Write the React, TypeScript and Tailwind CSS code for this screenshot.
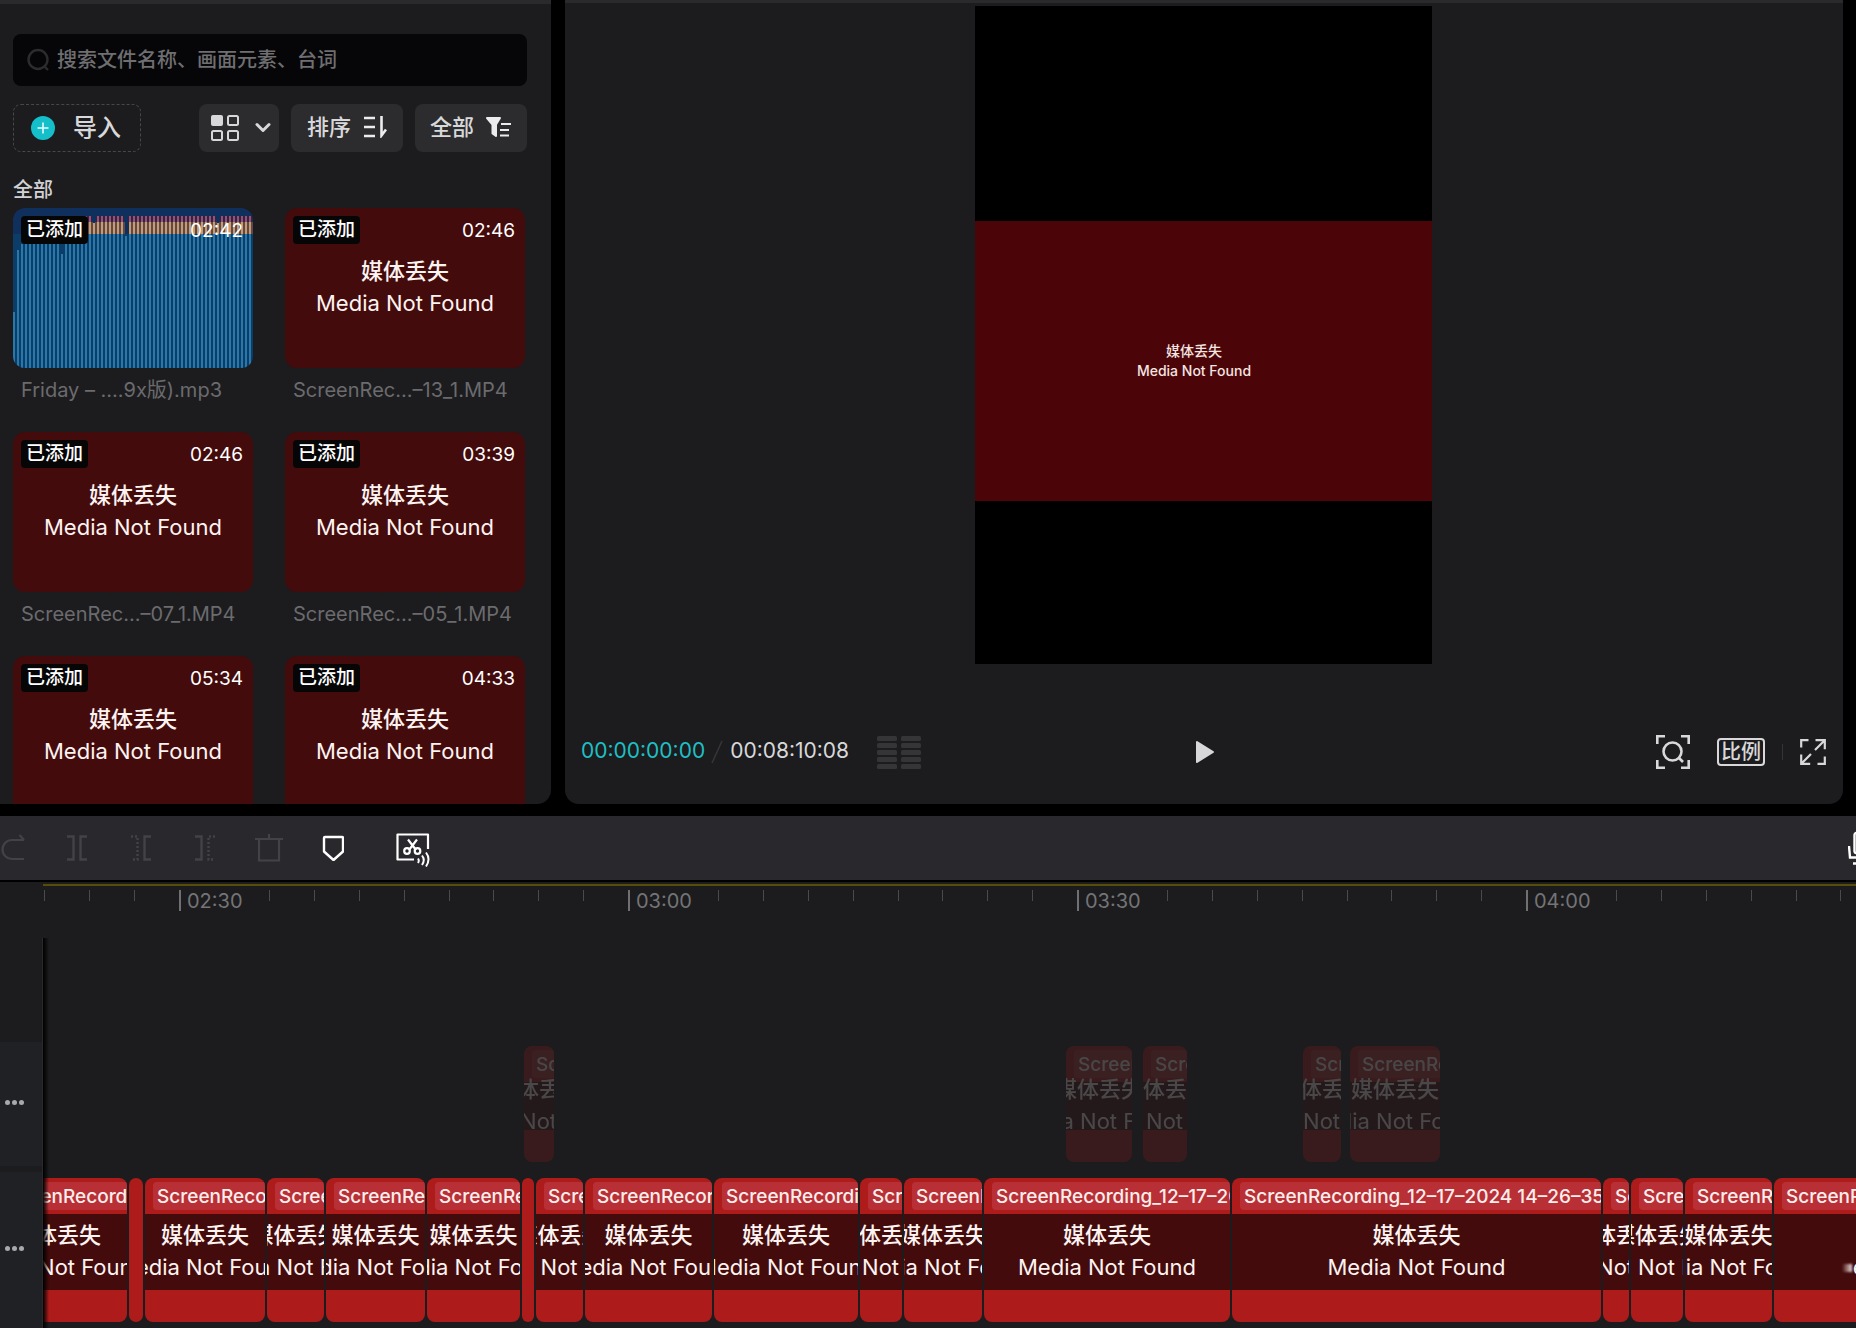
import type { ReactNode } from "react";

type MediaItem = {
  name: string;
  duration: string;
  kind: "audio" | "missing";
};

type TimelineClip = {
  gap: number;
  width: number;
  label?: string;
};

const MEDIA: MediaItem[] = [
  { name: "Friday – ….9x版).mp3", duration: "02:42", kind: "audio" },
  { name: "ScreenRec…–13_1.MP4", duration: "02:46", kind: "missing" },
  { name: "ScreenRec…–07_1.MP4", duration: "02:46", kind: "missing" },
  { name: "ScreenRec…–05_1.MP4", duration: "03:39", kind: "missing" },
  { name: "ScreenRec…–02_1.MP4", duration: "05:34", kind: "missing" },
  { name: "ScreenRec…–01_1.MP4", duration: "04:33", kind: "missing" },
];

const CLIP_NAME = "ScreenRecording_12–17–2024 14–26–35_1.MP4";

const OVERLAY_CLIPS: TimelineClip[] = [
  { gap: 481, width: 30, label: CLIP_NAME },
  { gap: 512, width: 66, label: CLIP_NAME },
  { gap: 11, width: 44, label: CLIP_NAME },
  { gap: 116, width: 38, label: CLIP_NAME },
  { gap: 9, width: 90, label: CLIP_NAME },
];

const MAIN_CLIPS: TimelineClip[] = [
  { gap: -56, width: 140, label: CLIP_NAME },
  { gap: 2, width: 14 },
  { gap: 2, width: 120, label: CLIP_NAME },
  { gap: 2, width: 57, label: CLIP_NAME },
  { gap: 2, width: 99, label: CLIP_NAME },
  { gap: 2, width: 93, label: CLIP_NAME },
  { gap: 2, width: 12 },
  { gap: 2, width: 47, label: CLIP_NAME },
  { gap: 2, width: 127, label: CLIP_NAME },
  { gap: 2, width: 144, label: CLIP_NAME },
  { gap: 2, width: 42, label: CLIP_NAME },
  { gap: 2, width: 78, label: CLIP_NAME },
  { gap: 2, width: 246, label: CLIP_NAME },
  { gap: 2, width: 369, label: CLIP_NAME },
  { gap: 2, width: 26, label: CLIP_NAME },
  { gap: 2, width: 52, label: CLIP_NAME },
  { gap: 2, width: 87, label: CLIP_NAME },
  { gap: 2, width: 296, label: CLIP_NAME },
];

const RULER_MARKS = ["02:30", "03:00", "03:30", "04:00"];

// Bars that do not reach full height, index -> top edge
const SHORT_BARS: Record<number, number> = { 0: 104, 1: 42, 2: 36, 3: 36, 12: 46, 20: 15, 28: 28, 51: 15 };

function Waveform() {
  const bars = Array.from({ length: 60 }, (_, i) => ({ x: i * 4, top: SHORT_BARS[i] ?? 8 }));
  return (
    <svg viewBox="0 0 240 160" preserveAspectRatio="none" className="h-full w-full" aria-hidden="true">
      <rect width="240" height="160" fill="#0f305c" />
      <rect y="26" width="240" height="134" fill="#0c3c68" />
      {bars.map(({ x, top }) => (
        <g key={x}>
          {top < 14 ? <rect x={x} y={top} width="2" height={14 - top} fill="#b8455c" /> : null}
          {top < 26 ? (
            <rect x={x} y={Math.max(top, 14)} width="2" height={26 - Math.max(top, 14)} fill="#cb9a68" />
          ) : null}
          {top < 26 ? <rect x={x + 2} y={14} width="2" height="12" fill="#5a4a50" /> : null}
          <rect x={x} y={Math.max(top, 26)} width="2" height={160 - Math.max(top, 26)} fill="#2878aa" />
        </g>
      ))}
    </svg>
  );
}

function MediaMissing() {
  return (
    <div className="flex shrink-0 flex-col items-center text-[22px] leading-8 whitespace-nowrap text-[#fdf3f1]">
      <span className="font-medium">媒体丢失</span>
      <span>Media Not Found</span>
    </div>
  );
}

function MediaCard({ item }: { item: MediaItem }) {
  return (
    <li className="w-60">
      <div className="relative h-40 overflow-hidden rounded-xl bg-[#430b0b]">
        {item.kind === "audio" ? (
          <Waveform />
        ) : (
          <div className="flex h-full items-center justify-center pb-0.5">
            <MediaMissing />
          </div>
        )}
        <div className="absolute inset-x-2 top-2 flex h-7 items-center justify-between text-[19px] leading-7 text-white">
          <span className="rounded bg-[#070607] px-[5px] font-medium">已添加</span>
          <span className="pt-0.5 pr-0.5">{item.duration}</span>
        </div>
      </div>
      <p className="mt-2 px-2 text-xl leading-7 whitespace-nowrap text-[#6b6b6e]">{item.name}</p>
    </li>
  );
}

function FilterButton({ label, children }: { label: string; children: ReactNode }) {
  return (
    <button
      type="button"
      className="flex h-12 w-28 items-center justify-center gap-3 rounded-lg bg-[#2c2c2e] pb-0.5 text-[22px] font-medium text-[#d8d8da]"
    >
      {label}
      {children}
    </button>
  );
}

function MediaPanel() {
  return (
    <section className="flex w-[551px] shrink-0 flex-col overflow-hidden rounded-br-[14px] border-t-4 border-[#2a2a2d] bg-[#1c1c1e] pt-[30px] pr-6 pl-[13px]">
      <label className="flex h-[52px] shrink-0 items-center gap-2 rounded-lg bg-[#060608] pl-3.5">
        <svg viewBox="0 0 22 24" className="h-6 w-[22px] shrink-0" fill="none" stroke="#2c2c30" strokeWidth="2.4">
          <circle cx="11" cy="11.5" r="9.5" />
          <path d="M17.5 18.5l3.5 3.5" />
        </svg>
        <input
          type="text"
          aria-label="搜索"
          placeholder="搜索文件名称、画面元素、台词"
          className="min-w-0 flex-1 bg-transparent text-xl font-medium text-[#d8d8da] outline-none placeholder:text-[#6f6f72]"
        />
      </label>

      <div className="mt-[18px] flex shrink-0 items-center gap-3">
        <button
          type="button"
          className="mr-auto flex h-12 w-32 items-center gap-[18px] rounded-lg border border-dashed border-[#47474a] pl-[17px] text-2xl font-medium text-[#d8d8da]"
        >
          <svg viewBox="0 0 24 24" className="size-6 shrink-0" aria-hidden="true">
            <circle cx="12" cy="12" r="12" fill="#14bfca" />
            <path d="M12 6.5v11M6.5 12h11" stroke="#e6fbfc" strokeWidth="1.6" />
          </svg>
          导入
        </button>
        <button
          type="button"
          aria-label="视图"
          className="flex h-12 w-20 items-center gap-4 rounded-lg bg-[#2c2c2e] pl-3"
        >
          <svg viewBox="0 0 28 26" className="h-[26px] w-7 shrink-0" fill="none" stroke="#d8d8da" strokeWidth="2">
            <rect x="0" y="0" width="12" height="11" rx="2" fill="#d8d8da" stroke="none" />
            <rect x="17" y="1" width="10" height="9" rx="1.5" />
            <rect x="1" y="16" width="10" height="9" rx="1.5" />
            <rect x="17" y="16" width="10" height="9" rx="1.5" />
          </svg>
          <svg viewBox="0 0 16 12" className="h-3 w-4 shrink-0" fill="none" stroke="#d8d8da" strokeWidth="3">
            <path d="M2 2.5L8 8.500 14 2.500" strokeLinecap="round" strokeLinejoin="round" />
          </svg>
        </button>
        <FilterButton label="排序">
          <svg viewBox="0 0 24 22" className="h-[22px] w-6" fill="none" stroke="#ececee" strokeWidth="2.6">
            <path d="M1 2h11M1 11h11M1 20h11M18.5 0v19.5l4.5-6" />
          </svg>
        </FilterButton>
        <FilterButton label="全部">
          <svg viewBox="0 0 26 20" className="h-5 w-[26px]" stroke="#ececee" strokeWidth="2">
            <path d="M1 1h13L10 7.5V19L6.5 16.5V7.5z" fill="#ececee" strokeLinejoin="round" />
            <path d="M15 7h10M14 13h9M14 18.5h9" />
          </svg>
        </FilterButton>
      </div>

      <h2 className="mt-6 shrink-0 text-xl leading-7 font-medium text-[#d2d2d4]">全部</h2>
      <ul className="mt-1 grid min-h-0 flex-1 grid-cols-[240px_240px] content-start gap-x-8 gap-y-7 overflow-hidden">
        {MEDIA.map((item) => (
          <MediaCard key={item.name} item={item} />
        ))}
      </ul>
    </section>
  );
}

function PreviewPanel() {
  return (
    <section className="flex min-w-0 flex-1 flex-col rounded-b-[14px] border-t-3 border-[#2a2a2d] bg-[#1c1c1e]">
      <div className="flex min-h-0 flex-1 justify-center pt-[3px] pr-0.5 pb-9">
        <div className="flex aspect-[457/658] h-full flex-col bg-black">
          <div className="flex-[215]" />
          <div className="flex flex-[280] flex-col items-center justify-center bg-[#4b0407] pr-[18px] text-sm leading-5 font-medium text-[#f5e4e2]">
            <span>媒体丢失</span>
            <span>Media Not Found</span>
          </div>
          <div className="flex-[163]" />
        </div>
      </div>

      <div className="grid h-[104px] shrink-0 grid-cols-[1fr_auto_1fr] items-center pr-[17px] pl-4">
        <div className="flex items-center text-[21px] leading-7 whitespace-nowrap">
          <span className="pb-0.5 text-[#1fbfc4]">00:00:00:00</span>
          <svg viewBox="0 0 25 24" className="h-6 w-[25px]" stroke="#363638" strokeWidth="1.5" aria-hidden="true">
            <path d="M7 23L17 1" />
          </svg>
          <span className="pb-0.5 text-[#d8d8da]">00:08:10:08</span>
          <svg viewBox="0 0 44 33" className="ml-7 h-[33px] w-11" fill="#353436" aria-hidden="true">
            {[0, 7, 14, 21, 28].map((y) => (
              <g key={y}>
                <rect x="0" y={y} width="20" height="5" rx="1.5" />
                <rect x="24" y={y} width="20" height="5" rx="1.5" />
              </g>
            ))}
          </svg>
        </div>

        <button type="button" aria-label="播放">
          <svg viewBox="0 0 22 24" className="h-6 w-[22px]" fill="#d8d8da" stroke="#d8d8da" strokeWidth="2">
            <path d="M4 2l16 10L4 22z" strokeLinejoin="round" />
          </svg>
        </button>

        <div className="flex items-center justify-end">
          <button type="button" aria-label="缩放">
            <svg viewBox="0 0 34 34" className="size-[34px]" fill="none" stroke="#d8d8da" strokeWidth="2.6">
              <path d="M1.3 9V1.3H9M25 1.3h7.7V9M1.3 25v7.7H9M25 32.7h7.7V25" />
              <circle cx="16.5" cy="16.5" r="9" />
              <path d="M23 23l4 4" />
            </svg>
          </button>
          <button
            type="button"
            className="ml-[27px] flex h-7 w-12 items-center justify-center rounded-sm border-2 border-[#d8d8da] text-xl leading-6 font-medium text-[#d8d8da]"
          >
            比例
          </button>
          <div className="mx-[17px] h-4 w-px bg-[#343436]" />
          <button type="button" aria-label="全屏">
            <svg viewBox="0 0 26 26" className="size-[26px]" fill="none" stroke="#d8d8da" strokeWidth="2.2">
              <path d="M1.2 8.5V1.2h7.3M24.8 17.5v7.3h-7.3M15 11l9.5-9.5M15.5 1.2h9.3v9M11 15l-9.5 9.5M1.2 15.5v9.3h9" />
            </svg>
          </button>
        </div>
      </div>
    </section>
  );
}

function ToolButton({ label, disabled, children }: { label: string; disabled?: boolean; children: ReactNode }) {
  return (
    <button
      type="button"
      aria-label={label}
      disabled={disabled}
      className="flex h-full w-16 shrink-0 items-center justify-center text-white disabled:text-[#434248]"
    >
      {children}
    </button>
  );
}

function Toolbar() {
  return (
    <div className="flex h-16 items-center overflow-hidden bg-[#29282d]">
      <div className="-ml-[19px] flex h-full">
        <ToolButton label="重做" disabled>
          <svg viewBox="0 0 26 28" className="h-7 w-[26px]" fill="none" stroke="currentColor" strokeWidth="2.2">
            <path d="M24 6H12a9.500 9.500 0 0 0 0 19H24M19.500 1L24 6" />
          </svg>
        </ToolButton>
        <ToolButton label="分割" disabled>
          <svg viewBox="0 0 20 26" className="h-[26px] w-5" fill="none" stroke="currentColor" strokeWidth="2.4">
            <path d="M0 1.5h6.5v23H0M20 1.5h-6.5v23H20" />
          </svg>
        </ToolButton>
        <ToolButton label="向左裁剪" disabled>
          <svg viewBox="0 0 20 26" className="h-[26px] w-5" fill="none" stroke="currentColor" strokeWidth="2.4">
            <path d="M0 1.5h6.5v23H0" strokeDasharray="2 2" />
            <path d="M20 1.5h-6.5v23H20" />
          </svg>
        </ToolButton>
        <ToolButton label="向右裁剪" disabled>
          <svg viewBox="0 0 20 26" className="h-[26px] w-5" fill="none" stroke="currentColor" strokeWidth="2.4">
            <path d="M0 1.5h6.5v23H0" />
            <path d="M20 1.5h-6.5v23H20" strokeDasharray="2 2" />
          </svg>
        </ToolButton>
        <ToolButton label="删除" disabled>
          <svg viewBox="0 0 28 28" className="size-7" fill="none" stroke="currentColor" strokeWidth="2.2">
            <path d="M0 5h28M14 0v5M4 5v21.5h20V5" />
          </svg>
        </ToolButton>
        <ToolButton label="标记">
          <svg viewBox="0 0 22 26" className="h-[26px] w-[22px]" fill="none" stroke="currentColor" strokeWidth="2.4">
            <path d="M3 2h17a1 1 0 0 1 1 1v13.5L11.5 25 2 16.5V3a1 1 0 0 1 1-1z" strokeLinejoin="round" />
          </svg>
        </ToolButton>
        <div className="ml-4 h-full">
          <ToolButton label="智能剪口播">
            <svg viewBox="0 0 34 34" className="mt-1 size-[34px]" fill="none" stroke="currentColor" strokeWidth="2.2">
              <path d="M32 16V1.5H1.5V26.5H18" strokeLinejoin="round" />
              <path d="M12 6.5l8 10.5M21 6.5l-8 10.5" />
              <circle cx="11" cy="18" r="2.8" />
              <circle cx="21.5" cy="18" r="2.8" />
              <path d="M22 25.5q1.5 2 0 4.5M26 22.5q3.5 4.5 0 9.5M30 19.5q5 6.5 0 14" strokeWidth="2" />
            </svg>
          </ToolButton>
        </div>
      </div>
      <button type="button" aria-label="录音" className="-mr-5 ml-auto shrink-0 text-white">
        <svg viewBox="0 0 28 34" className="h-[34px] w-7" fill="none" stroke="currentColor" strokeWidth="2.4">
          <rect x="6.5" y="2" width="14" height="20" rx="2" />
          <path d="M1 15l1 11.5h22l1-11.5M5 32.5h17" />
        </svg>
      </button>
    </div>
  );
}

function MinorTick() {
  return <span className="h-[11px] w-[45px] shrink border-l border-[#4a4a4c]" />;
}

function Ruler() {
  return (
    <div className="ml-[43px] flex h-[54px] items-start overflow-hidden border-t-2 border-[#544e08] pt-1 pl-px">
      <div className="flex w-[135px] shrink-0">
        <MinorTick />
        <MinorTick />
        <MinorTick />
      </div>
      {RULER_MARKS.map((mark) => (
        <div key={mark} className="flex w-[449px] shrink-0 items-start">
          <span className="h-[21px] w-[90px] shrink-0 border-l-2 border-[#707073] pl-1.5 text-xl leading-[22px] text-[#747477]">
            {mark}
          </span>
          {Array.from({ length: 8 }, (_, i) => (
            <MinorTick key={i} />
          ))}
        </div>
      ))}
    </div>
  );
}

function Clip({ clip }: { clip: TimelineClip }) {
  return (
    <div
      className="flex h-full shrink-0 flex-col overflow-hidden rounded-lg bg-[#ad1b1b]"
      style={{ width: clip.width, marginLeft: clip.gap }}
    >
      {clip.label ? (
        <>
          <div className="shrink-0 py-1 pl-2">
            <div className="h-7 overflow-hidden rounded-l bg-[#b83036] pl-1 text-[19px] leading-[30px] font-medium whitespace-nowrap text-[#fdeeec]">
              {clip.label}
            </div>
          </div>
          <div className="mb-8 flex min-h-0 flex-1 flex-col items-center justify-center bg-[#430b0b] pb-0.5">
            <MediaMissing />
          </div>
        </>
      ) : null}
    </div>
  );
}

function TrackMenu() {
  return (
    <button type="button" aria-label="更多" className="ml-[5px] flex gap-0.5">
      <span className="size-[5px] rounded-full bg-[#a9a9ac]" />
      <span className="size-[5px] rounded-full bg-[#a9a9ac]" />
      <span className="size-[5px] rounded-full bg-[#a9a9ac]" />
    </button>
  );
}

function Timeline() {
  return (
    <section className="shrink-0 overflow-hidden bg-[#1c1c1e]">
      <Toolbar />
      <div className="h-1 border-t-2 border-black" />
      <Ruler />
      <div className="flex">
        <div className="flex w-[43px] shrink-0 flex-col gap-1.5 border-r border-[#2a2a2c] pt-[104px]">
          <div className="flex h-[124px] items-center bg-[#202125] pb-1">
            <TrackMenu />
          </div>
          <div className="flex h-[156px] items-center bg-[#202125] pb-1">
            <TrackMenu />
          </div>
        </div>
        <div className="relative flex min-w-0 flex-1 flex-col gap-1.5 overflow-hidden pt-[104px]">
          <div className="flex h-[124px] py-1 opacity-20">
            {OVERLAY_CLIPS.map((clip, i) => (
              <Clip key={i} clip={clip} />
            ))}
          </div>
          <div className="flex h-[156px] py-1.5">
            {MAIN_CLIPS.map((clip, i) => (
              <Clip key={i} clip={clip} />
            ))}
          </div>
          <div className="absolute inset-y-0 left-0 w-1.5 bg-linear-to-r from-black to-transparent" />
          {/* soft glint at the edge of the last clip */}
          <div className="absolute right-1 bottom-11 flex h-8 w-5 items-center justify-end bg-[#430b0b]">
            <span className="h-2 w-2.5 bg-linear-to-r from-transparent to-[#e8d8d8] blur-[1px]" />
          </div>
        </div>
      </div>
    </section>
  );
}

export default function App() {
  return (
    <main className="flex h-screen flex-col overflow-hidden bg-black font-['Inter','Noto_Sans_CJK_SC',sans-serif]">
      <div className="flex min-h-0 flex-1 gap-3.5 pr-[13px] pb-3">
        <MediaPanel />
        <PreviewPanel />
      </div>
      <Timeline />
    </main>
  );
}
